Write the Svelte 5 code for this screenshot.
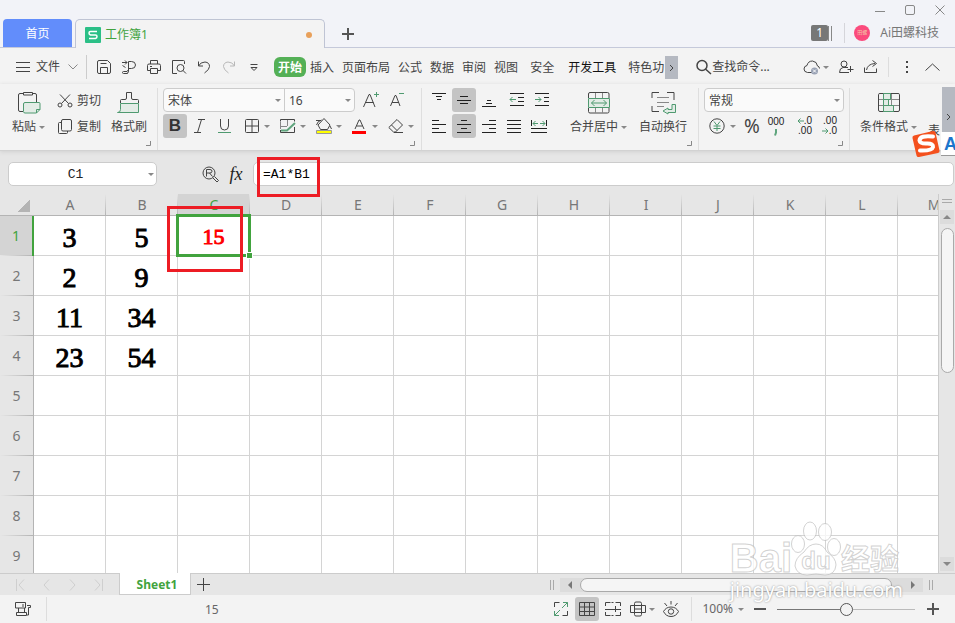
<script lang="ts">
  type Shape = [cls: string, d: string];
  type Icon = { w: number; h: number; shapes: Shape[] };

  const icons: Record<string, Icon> = {
    minimize: { w: 10, h: 10, shapes: [['grey', 'M0 6.5h10']] },
    maximize: { w: 10, h: 10, shapes: [['grey', 'M2 .5h6q1.500 0 1.500 1.500v6q0 1.500-1.500 1.500h-6q-1.500 0-1.500-1.500v-6q0-1.500 1.500-1.500z']] },
    close: { w: 10, h: 10, shapes: [['grey', 'M.5.5l9 9M9.500.5l-9 9']] },
    plus: { w: 12, h: 12, shapes: [['thick', 'M6 0v12M0 6h12']] },
    plusThin: { w: 14, h: 14, shapes: [['dark', 'M6.5 0v13M0 6.500h13']] },
    minus: { w: 12, h: 12, shapes: [['thick', 'M0 6h12']] },
    burger: { w: 14, h: 12, shapes: [['dark', 'M0 1.5h14M0 6.500h14M0 10.500h14']] },
    chevronDown: { w: 10, h: 6, shapes: [['grey', 'M.5.5l4.500 4.500 4.500-4.500']] },
    chevronUp: { w: 15, h: 8, shapes: [['dark', 'M.5 7.500l7-6.500 7 6.500']] },
    chevronRight: { w: 5, h: 8, shapes: [['dark', 'M1 1l3 3-3 3']] },
    save: { w: 16, h: 16, shapes: [['dark', 'M1.500 3q0-1.500 1.500-1.500h8.500l3 3V13q0 1.500-1.500 1.500H3q-1.500 0-1.500-1.500zM4.500 14V8.500h7V14M4.500 4.500h6']] },
    output: { w: 16, h: 16, shapes: [['dark', 'M1 3.500h5M4 1.500l2 2-2 2M1.500 6.500l3 2M6.500 14.500h-4q-1 0-1-1t1-1H6l1.500-2V2.500h3q4 0 4 3.500t-4 3.500h-3v2.500q0 2.500-2 2.500']] },
    print: { w: 16, h: 16, shapes: [['dark', 'M4.500 5V1.500h7V5M4 11.500H1.500V6.500q0-1.500 1.500-1.500h10q1.500 0 1.500 1.500v5H12M4.500 9.500h7v5h-7zM4 7.500h2']] },
    preview: { w: 16, h: 16, shapes: [['dark', 'M6 14.500H1.500v-13h11q1 0 1 1V5M13 9a3.500 3.500 0 1 1-7 0 3.500 3.500 0 0 1 7 0zM12 11.500l3 3']] },
    undo: { w: 16, h: 16, shapes: [['dark', 'M2.500 2.500v4.500H7M2.500 7q2-4 6.500-4 4.500.5 4.500 4.500 0 3-5 6.500']] },
    redo: { w: 16, h: 16, shapes: [['pale', 'M13.500 2.500v4.500H9M13.500 7q-2-4-6.500-4-4.500.5-4.500 4.500 0 3 5 6.500']] },
    more: { w: 16, h: 16, shapes: [['dark', 'M4.500 5.500h7M5 8.500l3 3 3-3z']] },
    search: { w: 16, h: 16, shapes: [['bold', 'M11 6.500a5 5 0 1 1-10 0 5 5 0 0 1 10 0zM10 10.500l5 4.500']] },
    cloud: { w: 18, h: 16, shapes: [['dark', 'M9 13.500H4.500Q1 13 1 10q0-3 3-3.500Q5 2 9.500 2q4.500.5 5 5 2 .5 2 2.500'], ['badge', 'M15 12a3.500 3.500 0 1 1-7 0 3.500 3.500 0 0 1 7 0z'], ['white', 'M10 10.500l3 3M13 10.500l-3 3']] },
    user: { w: 16, h: 16, shapes: [['dark', 'M9 5a3 3 0 1 1-6 0 3 3 0 0 1 6 0zM10 8.500H5Q1.500 9 1.500 13.500H11M12.500 7v6M9.500 10.500h6']] },
    share: { w: 16, h: 16, shapes: [['dark', 'M1.500 8.500v5h12v-4M3.500 11q1-6 8.500-6.500M9.500 1.500l4 3-4 3']] },
    dots: { w: 4, h: 14, shapes: [['fill', 'M1 1h2v2H1zM1 6h2v2H1zM1 11h2v2H1z']] },
    launcher: { w: 5, h: 5, shapes: [['grey', 'M4.500 0v4.500H0']] },

    paste: { w: 24, h: 24, shapes: [['dark', 'M6 2.500H3Q1.500 2.500 1.500 4v15q0 1.500 1.500 1.500h3M15 2.500h3q1.500 0 1.500 1.500v7M6.500 1.500h9v2.500h-9z'], ['tint', 'M8 11.500h14q1 0 1 1v6L19.500 22H8q-1.500 0-1.500-1.500V13q0-1.500 1.500-1.500zM19.500 22v-3.500H23']] },
    cut: { w: 16, h: 16, shapes: [['dark', 'M3 1.500l8.500 9M13 1.500l-8.500 9M5 12a2 2 0 1 1-4 0 2 2 0 0 1 4 0zM15 12a2 2 0 1 1-4 0 2 2 0 0 1 4 0z']] },
    copy: { w: 16, h: 16, shapes: [['dark', 'M4 3.500H2.500Q1.500 3.500 1.500 4.500v9q0 1 1 1h7q1 0 1-1V12M6 .5h7q1.500 0 1.500 1.500v8.500q0 1.500-1.500 1.500H6q-1.500 0-1.500-1.500V2q0-1.500 1.500-1.500z']] },
    brush: { w: 24, h: 24, shapes: [['dark', 'M3.500 12V9.500q0-1 1-1H8q1.500 0 1.500-1.500V1.500h5V7q0 1.500 1.500 1.500h4.500q1 0 1 1V12'], ['tint', 'M3.500 12.500h18v9H.5q3 0 3-3z']] },
    fontUp: { w: 18, h: 18, shapes: [['dark', 'M1.500 16L7 3.500h1L13 16M3.500 11.500h8'], ['green', 'M12 3.500h5M14.500 1v5']] },
    fontDown: { w: 18, h: 18, shapes: [['dark', 'M2.500 15L7 4.500h1L12 15M4 11.500h7'], ['green', 'M11 2.500h5']] },
    italic: { w: 16, h: 16, shapes: [['dark', 'M6 1.500h7M2 14.500h7M9.500 1.500l-4 13']] },
    underline: { w: 16, h: 16, shapes: [['dark', 'M3.500 1v7q0 4 4 4t4-4V1'], ['green', 'M1 14.500h13']] },
    borders: { w: 16, h: 16, shapes: [['dark', 'M1.500 2.500q0-1 1-1h11q1 0 1 1v11q0 1-1 1h-11q-1 0-1-1zM8 1.500v13M1.500 8h13']] },
    cellStyle: { w: 16, h: 16, shapes: [['dark', 'M.5 3.500V1.500h14v2M.5 12v2.500h14V9'], ['grey', 'M7.500 2v6M1 8.500h6M.5 4v7'], ['greenBold', 'M1 12.500h6l8-7.500']] },
    fill: { w: 16, h: 18, shapes: [['dark', 'M.5 8q1-4 5-5M4.500 12.500L2 8l6-6.500L14 8l-2.500 4.500zM0 3.500h5M14 9l1.500 3'], ['yellow', 'M.5 13.500h15v3H.5z']] },
    fontColor: { w: 16, h: 18, shapes: [['dark', 'M3 12L7 3h1l4 9M4.500 9h6'], ['red', 'M0 14h14v3H0z']] },
    eraser: { w: 16, h: 16, shapes: [['dark', 'M9 1.500l5.500 5.500-7 7h-2L.8 9.500zM3.500 7l5.500 5.500M6 14.500h9']] },
    top: { w: 14, h: 14, shapes: [['line', 'M0 .5h14M4 3.500h6M5 6.500h4']] },
    middle: { w: 14, h: 14, shapes: [['line', 'M3 3.500h8M0 7.500h14M3 10.500h8']] },
    bottom: { w: 14, h: 14, shapes: [['line', 'M5 7.500h4M4 10.500h6M0 13.500h14']] },
    outdent: { w: 16, h: 14, shapes: [['line', 'M1 .5h14M9 4.500h6M9 8.500h6M1 12.500h14'], ['green', 'M1 6.500h6M3.500 4L1 6.500 3.500 9']] },
    indent: { w: 16, h: 14, shapes: [['line', 'M1 .5h14M10 4.500h5M10 8.500h5M1 12.500h14'], ['green', 'M1 6.500h6M4.500 4L7 6.500 4.500 9']] },
    left: { w: 14, h: 14, shapes: [['line', 'M0 1.500h7M0 5.500h14M0 9.500h7M0 13.500h14']] },
    center: { w: 14, h: 14, shapes: [['line', 'M4 1.500h6M0 5.500h14M4 9.500h6M0 13.500h14']] },
    right: { w: 14, h: 14, shapes: [['line', 'M7 1.500h7M0 5.500h14M7 9.500h7M0 13.500h14']] },
    justify: { w: 14, h: 14, shapes: [['line', 'M0 1.500h14M0 5.500h14M0 9.500h14M0 13.500h14']] },
    spread: { w: 16, h: 14, shapes: [['line', 'M.5 1v6M15.500 1v6M0 9.500h16M0 13.500h16'], ['green', 'M2 4.500h5M9 4.500h5M4.500 2L2 4.500 4.500 7M11.500 2L14 4.500 11.500 7']] },
    merge: { w: 24, h: 24, shapes: [['dark', 'M1.500 7V3q0-1.500 1.500-1.500h17.500q1.500 0 1.500 1.500v4M1.500 17v3.500q0 1.500 1.500 1.500h17.500q1.500 0 1.500-1.500V17'], ['grey', 'M8.500 2v5M15.500 2v5M8.500 17v5M15.500 17v5'], ['tint', 'M1.500 7.500h21v9h-21z'], ['green', 'M4.500 12h15M7.500 9l-3 3 3 3M16.500 9l3 3-3 3']] },
    wrap: { w: 24, h: 24, shapes: [['dark', 'M1 7V1.500h7M16 1.500h7V9M1 15v5.500h7'], ['grey', 'M6 6.500h12M6 11.500h12M6 15.500h7'], ['tint', 'M21 13.500h3.500v8H17V23l-5-3 5-3v1.500h4z']] },
    arrowLeft: { w: 7, h: 6, shapes: [['green', 'M1 3h6M3.500.5L1 3l2.500 2.500']] },
    arrowRight: { w: 7, h: 6, shapes: [['green', 'M0 3h6M3.500.5L6 3 3.500 5.500']] },
    thousand: { w: 4, h: 7, shapes: [['greenBold', 'M2 0v3.500L1 6.500']] },
    condition: { w: 24, h: 24, shapes: [['grey', 'M2 8.500h20M2 14.500h20M7.500 3v17M14.500 3v17'], ['dark', 'M3 2.500h18q1.500 0 1.500 1v15.500q0 1.500-1.500 1.500H3q-1.500 0-1.500-1.500V3.500q0-1 1.500-1z'], ['tint', 'M6.500 2.500h7v6h-7zM6.500 8.500h5v6h-5zM6.500 14.500h10v6h-10z']] },
    yen: { w: 16, h: 16, shapes: [['dark', 'M15.200 8a7.200 7.200 0 1 1-14.400 0 7.200 7.200 0 0 1 14.400 0z'], ['green', 'M5 3.500l3 4 3-4M4.500 8h7M4.500 10.500h7M8 8v5']] },

    lookup: { w: 17, h: 17, shapes: [['dark', 'M13 7A6 6 0 1 1 1 7a6 6 0 0 1 12 0zM4.500 10.500v-7H8q2 0 2 1.700T8 7H4.500M7.500 7l3 3.500M11 12l4 4 1.500-1.500-4-4']] },
    first: { w: 9, h: 12, shapes: [['faint', 'M.5 0v12M8 .5L3 6l5 5.500']] },
    prev: { w: 9, h: 12, shapes: [['faint', 'M7 .5L2 6l5 5.500']] },
    next: { w: 9, h: 12, shapes: [['faint', 'M2 .5L7 6l-5 5.500']] },
    last: { w: 9, h: 12, shapes: [['faint', 'M8.500 0v12M1 .5L6 6l-5 5.500']] },
    macro: { w: 17, h: 16, shapes: [['dark', 'M.5 1.500h10V7H.5zM10.500 3v3M3.500 7v4.500M9.500 7v4.500M1.500 11.500h10v3h-10zM12 4.500h3.500v2h-2v7.500H12M8 3v3']] },
    fullscreen: { w: 16, h: 16, shapes: [['dark', 'M1.500 6V1.500h5M14.500 10v4.500h-5'], ['green', 'M9 7l5.500-5.500M10 1.500h4.500V6M7 9l-5.500 5.500M1.500 10v4.500H6']] },
    normal: { w: 16, h: 16, shapes: [['dark', 'M.5 1.500h15v13H.5zM.5 6h15M.5 10.500h15M5.500 1.500v13M10.500 1.500v13']] },
    pages: { w: 16, h: 16, shapes: [['dark', 'M.5 5V1.500h5M10.500 1.500h5V5M.5 11v3.500h5M10.500 14.500h5V11M0 8.500h16M10.500 5v6M8.500 1.500h-2M8.500 14.500h-2']] },
    reading: { w: 16, h: 16, shapes: [['dark', 'M4.500 2.500q0-1.500 1.500-1.500h4q1.500 0 1.500 1.500v11q0 1.500-1.500 1.500H6q-1.500 0-1.500-1.500zM.5 4.500h15v7H.5zM4.500 8h7']] },
    eye: { w: 16, h: 16, shapes: [['dark', 'M.5 10.500Q3 6 8 6t7.500 4.500Q13 15.500 8 15.500T.5 10.500zM10.700 10.500a2.700 2.700 0 1 1-5.400 0 2.700 2.700 0 0 1 5.400 0zM8 0v3.500M1.500 2l2.500 3M14.500 2L12 5']] },
  };

  const quickTools = ['save', 'output', 'print', 'preview', 'undo', 'redo', 'more'];
  const menuTabs = ['插入', '页面布局', '公式', '数据', '审阅', '视图'];
  const columns = 'ABCDEFGHIJKLM'.split('');
  const rows: string[][] = [['3', '5', '15'], ['2', '9'], ['11', '34'], ['23', '54'], [], [], [], [], []];

  let cellName = $state('C1');
  let formula = $state('=A1*B1');
  let zoom = $state(100);
</script>

{#snippet icon(name: string)}
  {@const i = icons[name]}
  <svg class="icon" width={i.w} height={i.h} viewBox="0 0 {i.w} {i.h}" aria-hidden="true">
    {#each i.shapes as [cls, d]}
      <path class={cls} {d} />
    {/each}
  </svg>
{/snippet}

{#snippet caret()}
  <span class="caret"></span>
{/snippet}

<div class="app">
  <header class="titlebar">
    <button class="home-tab">首页</button>
    <div class="doc-tab">
      <svg width="16" height="16" viewBox="0 0 16 16" aria-hidden="true">
        <rect width="16" height="16" rx="1" fill="#2bbf86" />
        <path d="M12 4.500H5.500Q4 4.500 4 6t1.500 2h5q1.500 0 1.500 1.500T10.500 11.500H4" fill="none" stroke="#fff" stroke-width="1.500" />
      </svg>
      <span class="doc-name">工作簿1</span>
      <span class="unsaved"></span>
    </div>
    <button class="new-tab" aria-label="New">{@render icon('plus')}</button>
    <div class="title-right">
      <div class="window-buttons">
        <button aria-label="Minimize">{@render icon('minimize')}</button>
        <button aria-label="Maximize">{@render icon('maximize')}</button>
        <button aria-label="Close">{@render icon('close')}</button>
      </div>
      <div class="account">
        <span class="count">1</span>
        <span class="bars"></span>
        <span class="account-sep"></span>
        <span class="avatar">田螺</span>
        <span class="account-name">Ai田螺科技</span>
      </div>
    </div>
  </header>

  <nav class="menubar">
    <button class="file-menu">{@render icon('burger')}<span>文件</span>{@render icon('chevronDown')}</button>
    <span class="menu-sep"></span>
    <div class="quick">
      {#each quickTools as tool}
        <button aria-label={tool}>{@render icon(tool)}</button>
      {/each}
    </div>
    <div class="tabs">
      <button class="active">开始</button>
      {#each menuTabs as tab}
        <button>{tab}</button>
      {/each}
      <button class="wide">安全</button>
      <button class="wide strong">开发工具</button>
      <button class="special">特色功</button>
      <button class="tab-scroll" aria-label="More tabs">{@render icon('chevronRight')}</button>
    </div>
    <button class="find">{@render icon('search')}<span>查找命令...</span></button>
    <div class="menu-right">
      <button class="with-caret" aria-label="Cloud">{@render icon('cloud')}{@render caret()}</button>
      <button aria-label="Share with">{@render icon('user')}</button>
      <button aria-label="Share">{@render icon('share')}</button>
      <span class="menu-sep light"></span>
      <button class="dots-btn" aria-label="Options">{@render icon('dots')}</button>
      <button aria-label="Collapse ribbon">{@render icon('chevronUp')}</button>
    </div>
  </nav>

  <section class="ribbon">
    <div class="group clipboard">
      <button class="big">{@render icon('paste')}<span>粘贴{@render caret()}</span></button>
      <div class="stack">
        <button class="small">{@render icon('cut')}剪切</button>
        <button class="small">{@render icon('copy')}复制</button>
      </div>
      <button class="big">{@render icon('brush')}<span>格式刷</span></button>
      <span class="launcher">{@render icon('launcher')}</span>
    </div>

    <div class="group font-group">
      <div class="stack">
        <div class="tools">
          <div class="font-box">
            <div class="select family">
              <select aria-label="Font"><option>宋体</option></select>{@render caret()}
            </div>
            <div class="select size">
              <select aria-label="Font size"><option>16</option></select>{@render caret()}
            </div>
          </div>
          <button class="tool grow" aria-label="Increase font">{@render icon('fontUp')}</button>
          <button class="tool" aria-label="Decrease font">{@render icon('fontDown')}</button>
        </div>
        <div class="tools">
          <button class="tool on bold-btn">B</button>
          <button class="tool" aria-label="Italic">{@render icon('italic')}</button>
          <button class="tool" aria-label="Underline">{@render icon('underline')}</button>
          <div class="drop-tools">
            {#each ['borders', 'cellStyle', 'fill', 'fontColor', 'eraser'] as tool}
              <button aria-label={tool}>{@render icon(tool)}{@render caret()}</button>
            {/each}
          </div>
        </div>
      </div>
      <span class="launcher">{@render icon('launcher')}</span>
    </div>

    <div class="group align-group">
      <div class="stack">
        <div class="tools">
          {#each ['top', 'middle', 'bottom', 'outdent', 'indent'] as tool}
            <button class="tool" class:on={tool === 'middle'} class:shift={tool === 'outdent'} aria-label={tool}>{@render icon(tool)}</button>
          {/each}
        </div>
        <div class="tools">
          {#each ['left', 'center', 'right', 'justify', 'spread'] as tool}
            <button class="tool" class:on={tool === 'center'} aria-label={tool}>{@render icon(tool)}</button>
          {/each}
        </div>
      </div>
      <button class="big merge">{@render icon('merge')}<span>合并居中{@render caret()}</span></button>
      <button class="big">{@render icon('wrap')}<span>自动换行</span></button>
      <span class="launcher">{@render icon('launcher')}</span>
    </div>

    <div class="group number-group">
      <div class="stack">
        <div class="select format">
          <select aria-label="Number format"><option>常规</option></select>{@render caret()}
        </div>
        <div class="tools numbers">
          <button class="currency" aria-label="Currency">{@render icon('yen')}{@render caret()}</button>
          <button class="percent">%</button>
          <button class="digits thousands" aria-label="Thousands separator"><span>000</span>{@render icon('thousand')}</button>
          <button class="digits"><span>{@render icon('arrowLeft')}.0</span><span>.00</span></button>
          <button class="digits"><span>.00</span><span>{@render icon('arrowRight')}.0</span></button>
        </div>
      </div>
      <span class="launcher">{@render icon('launcher')}</span>
    </div>

    <div class="group style-group">
      <button class="big condition">{@render icon('condition')}<span>条件格式{@render caret()}</span></button>
      <button class="big cut-off"><span>表</span></button>
      <button class="ribbon-scroll" aria-label="Scroll ribbon">{@render icon('chevronRight')}</button>
    </div>

    <div class="ime">
      <svg width="30" height="28" viewBox="0 0 30 28" aria-hidden="true">
        <path d="M3 5.500L22 1q2-.4 2.500 1.500l4 18q.4 2-1.500 2.500L8 27q-2 .4-2.500-1.500l-4-17.500Q1 6 3 5.500z" fill="#f4511e" />
        <path d="M22 6.500Q9 5 8.500 10.500q.5 3.500 8 3 6 0 5.500 3.500-1 4-13 3.500" fill="none" stroke="#fff" stroke-width="4" stroke-linecap="round" />
      </svg>
      <span class="ime-mode">A</span>
    </div>
  </section>

  <section class="formula-bar">
    <div class="name-box">
      <input aria-label="Cell" bind:value={cellName} />{@render caret()}
    </div>
    <button class="lookup" aria-label="Lookup">{@render icon('lookup')}</button>
    <button class="fx">fx</button>
    <div class="formula">
      <input aria-label="Formula" bind:value={formula} />
      <span class="mark mark-formula"></span>
    </div>
  </section>

  <main class="sheet">
    <div class="grid">
      <table>
        <thead>
          <tr>
            <th class="corner" aria-label="Select all"></th>
            {#each columns as col}
              <th class:current={col === 'C'}>{col}</th>
            {/each}
          </tr>
        </thead>
        <tbody>
          {#each rows as row, r}
            <tr>
              <th class:current={r === 0}>{r + 1}</th>
              {#each columns as _, c}
                {#if r === 0 && c === 2}
                  <td class="selected">{row[c]}<span class="handle"></span><span class="mark mark-cell"></span></td>
                {:else}
                  <td>{row[c] ?? ''}</td>
                {/if}
              {/each}
            </tr>
          {/each}
        </tbody>
      </table>
    </div>
    <div class="vscroll">
      <span class="splitter"></span>
      <button class="arrow up" aria-label="Scroll up"></button>
      <div class="thumb"></div>
      <button class="arrow down" aria-label="Scroll down"></button>
    </div>
  </main>

  <div class="sheetbar">
    <div class="sheet-nav">
      {#each ['first', 'prev', 'next', 'last'] as nav}
        <button aria-label={nav}>{@render icon(nav)}</button>
      {/each}
    </div>
    <button class="sheet-tab">Sheet1</button>
    <button class="add-sheet" aria-label="Add sheet">{@render icon('plusThin')}</button>
    <span class="vsplit"></span>
    <div class="hscroll">
      <button class="arrow back" aria-label="Scroll left"></button>
      <div class="thumb"></div>
      <button class="arrow forward" aria-label="Scroll right"></button>
    </div>
    <span class="vsplit end"></span>
  </div>

  <footer class="statusbar">
    <button class="macro" aria-label="Macro">{@render icon('macro')}</button>
    <span class="result">15</span>
    <div class="views">
      <button aria-label="Full screen">{@render icon('fullscreen')}</button>
      <button class="on" aria-label="Normal view">{@render icon('normal')}</button>
      <button aria-label="Page view">{@render icon('pages')}</button>
      <button class="read" aria-label="Reading layout">{@render icon('reading')}{@render caret()}</button>
      <button aria-label="Eye protection">{@render icon('eye')}</button>
    </div>
    <button class="zoom-value">{zoom}%{@render caret()}</button>
    <button aria-label="Zoom out" onclick={() => (zoom -= 10)}>{@render icon('minus')}</button>
    <input class="slider" type="range" min="10" max="190" aria-label="Zoom" bind:value={zoom} />
    <button class="zoom-in" aria-label="Zoom in" onclick={() => (zoom += 10)}>{@render icon('plus')}</button>
  </footer>

  <div class="watermark">
    <div class="wm-top">
      <span class="wm-bai">Bai</span>
      <div class="wm-paw">
        <svg width="52" height="56" viewBox="0 0 52 56" aria-hidden="true">
          <ellipse cx="8" cy="23" rx="6.500" ry="8.500" />
          <ellipse cx="20" cy="10" rx="6.500" ry="9" />
          <ellipse cx="35" cy="11" rx="6.500" ry="8.500" />
          <ellipse cx="44" cy="26" rx="6.500" ry="8.500" />
          <path d="M26 23q7 0 11 8 9 6 9 13-1 10-11 10-9-2-18 0-10 0-12-9 0-8 9-14 5-8 12-8z" />
        </svg>
        <span class="wm-du">du</span>
      </div>
      <span class="wm-cn">经验</span>
    </div>
    <div class="wm-url">jingyan.baidu.com</div>
  </div>
</div>

<style>
  :global(body) {
    margin: 0;
  }

  .app {
    position: relative;
    display: flex;
    flex-direction: column;
    height: 100vh;
    overflow: hidden;
    background: #e6e6e6;
    color: #444;
    font-family: "Noto Sans", "Noto Sans CJK SC", sans-serif;
    font-size: 12px;
    line-height: 18px;
  }

  .app * {
    box-sizing: border-box;
  }

  button,
  input,
  select {
    margin: 0;
    padding: 0;
    border: 0;
    background: none;
    color: inherit;
    font: inherit;
    outline: none;
  }

  button {
    display: flex;
    flex: none;
    align-items: center;
    justify-content: center;
    white-space: nowrap;
  }

  svg {
    display: block;
    flex: none;
    overflow: visible;
  }

  .icon path {
    fill: none;
    stroke: #444;
  }

  .icon .grey { stroke: #888; }
  .icon .pale { stroke: #b8b8b8; }
  .icon .faint { stroke: #cfcfcf; }
  .icon .line { stroke: #222; }
  .icon .thick { stroke: #555; stroke-width: 2; }
  .icon .bold { stroke-width: 1.5; }
  .icon .white { stroke: #fff; }
  .icon .badge { fill: #9aa3b5; stroke: none; }
  .icon .fill { fill: #444; stroke: none; }
  .icon .green { stroke: #4f9a70; }
  .icon .greenBold { stroke: #5fa57d; stroke-width: 2; }
  .icon .tint { fill: #e3ece6; stroke: #4f9a70; }
  .icon .yellow { fill: #ff0; stroke: #999; }
  .icon .red { fill: #f00; stroke: none; }

  .caret {
    flex: none;
    width: 0;
    height: 0;
    border: 3px solid transparent;
    border-top-color: #888;
    border-bottom: 0;
  }

  /* title bar */
  .titlebar {
    display: flex;
    flex: none;
    align-items: flex-end;
    height: 48px;
    padding-left: 3px;
    background: linear-gradient(#c5c9da, #c5c9da) bottom / 100% 1px no-repeat #f2f3f8;
  }

  .home-tab {
    width: 69px;
    height: 28px;
    padding-top: 2px;
    margin-bottom: 1px;
    border-radius: 4px 4px 0 0;
    background: #628dfb;
    color: #fff;
  }

  .doc-tab {
    display: flex;
    align-items: center;
    gap: 4px;
    width: 250px;
    height: 29px;
    margin-left: 3px;
    padding: 2px 12px 0 9px;
    border: 1px solid #bfc4d4;
    border-bottom: 0;
    border-radius: 5px 5px 0 0;
    background: #f3f3f3;
  }

  .doc-name {
    flex: 1;
    color: #41a33e;
  }

  .unsaved {
    width: 6px;
    height: 6px;
    border-radius: 50%;
    background: #e8a05a;
  }

  .new-tab {
    width: 46px;
    height: 28px;
  }

  .title-right {
    display: flex;
    flex-direction: column;
    align-items: flex-end;
    margin-left: auto;
  }

  .window-buttons {
    display: flex;
    gap: 20px;
    height: 13px;
    padding-right: 10px;
  }

  .window-buttons button {
    width: 10px;
    height: 10px;
  }

  .account {
    display: flex;
    align-items: center;
    height: 30px;
    padding-right: 16px;
  }

  .count {
    width: 17px;
    height: 16px;
    border-radius: 2px;
    background: #777;
    color: #fff;
    line-height: 16px;
    text-align: center;
  }

  .bars {
    width: 4px;
    height: 15px;
    border: 1px solid #888;
    border-width: 0 1px;
  }

  .account-sep {
    width: 1px;
    height: 20px;
    margin: 0 9px 0 12px;
    background: #d5d5da;
  }

  .avatar {
    width: 16px;
    height: 16px;
    border-radius: 50%;
    background: #fb4b7d;
    color: #f3c9a8;
    font-size: 5px;
    line-height: 14px;
    text-align: center;
  }

  .account-name {
    margin-left: 10px;
    color: #777;
  }

  /* menu row */
  .menubar {
    display: flex;
    flex: none;
    align-items: center;
    height: 38px;
    margin-bottom: -2px;
    padding-left: 16px;
    background: #f3f3f3;
  }

  .file-menu span {
    margin: 0 8px 0 6px;
  }

  .menu-sep {
    width: 1px;
    height: 24px;
    margin: 0 4px 0 8px;
    background: #ccc;
  }

  .quick {
    display: flex;
  }

  .quick button {
    width: 25px;
    height: 24px;
  }

  .tabs {
    display: flex;
    align-items: center;
    height: 24px;
    margin-left: 8px;
  }

  .tabs button {
    height: 20px;
    padding: 1px 4px 0;
  }

  .tabs .active {
    border-radius: 6px;
    background: #54b056;
    color: #fff;
    font-weight: bold;
  }

  .tabs .wide {
    padding: 1px 6px 0 8px;
  }

  .tabs .strong {
    color: #111;
  }

  .tabs .special {
    padding: 1px 1px 0 6px;
  }

  .tabs .tab-scroll {
    width: 13px;
    height: 23px;
    background: #b5b9c1;
  }

  .find {
    margin-left: 18px;
  }

  .menu-right {
    display: flex;
    align-items: center;
    gap: 9px;
    margin-left: auto;
    padding-right: 15px;
  }

  .with-caret {
    gap: 2px;
  }

  .menu-sep.light {
    height: 20px;
    margin: 0;
    background: #ddd;
  }

  .dots-btn {
    width: 18px;
  }

  /* ribbon */
  .ribbon {
    position: relative;
    z-index: 1;
    display: flex;
    flex: none;
    height: 67px;
    padding-top: 4px;
    border-bottom: 1px solid #d2d2d2;
    background: #f3f3f3;
    box-shadow: 0 1px 4px #d0d0d0;
  }

  .group {
    position: relative;
    display: flex;
    flex: none;
    height: 62px;
    border-right: 1px solid #dedede;
  }

  .stack {
    display: flex;
    flex-direction: column;
    gap: 2px;
  }

  .big {
    flex-direction: column;
    justify-content: flex-start;
    gap: 3px;
    height: 60px;
    padding-top: 3px;
  }

  .big span {
    display: flex;
    align-items: center;
    gap: 3px;
  }

  .small {
    gap: 4px;
    height: 24px;
    padding-top: 2px;
  }

  .launcher {
    position: absolute;
    right: 6px;
    bottom: 4px;
  }

  .clipboard {
    width: 158px;
    gap: 12px;
    padding-left: 12px;
  }

  .clipboard .big + .stack {
    margin-right: -2px;
  }

  .tools {
    display: flex;
    gap: 1px;
    height: 24px;
  }

  .tool {
    width: 24px;
    height: 24px;
    border-radius: 3px;
  }

  .on {
    border-radius: 3px;
    background: #c4c4c4;
  }

  .font-group {
    width: 264px;
    padding-left: 5px;
  }

  .font-box {
    display: flex;
    border: 1px solid #ccc;
    border-radius: 4px;
    background: #fafafa;
  }

  .select {
    display: flex;
    align-items: center;
    padding-right: 3px;
  }

  .select select {
    flex: 1;
    min-width: 0;
    height: 22px;
    padding: 2px 0 0 4px;
    appearance: none;
  }

  .family {
    width: 121px;
    border-right: 1px solid #ccc;
  }

  .size {
    width: 69px;
  }

  .grow {
    margin: 0 1px 0 3px;
  }

  .bold-btn {
    color: #333;
    font-family: "Liberation Sans", sans-serif;
    font-size: 17px;
    font-weight: bold;
  }

  .drop-tools {
    display: flex;
    margin-left: 6px;
  }

  .drop-tools button {
    gap: 4px;
    justify-content: flex-start;
    width: 36px;
  }

  .align-group {
    width: 277px;
    gap: 12px;
    padding-left: 5px;
  }

  .shift {
    margin-left: 3px;
  }

  .merge {
    margin-left: 4px;
  }

  .number-group {
    width: 151px;
    padding-left: 5px;
  }

  .format {
    width: 140px;
    height: 24px;
    border: 1px solid #ccc;
    border-radius: 4px;
    background: #fafafa;
  }

  .numbers {
    gap: 0;
    padding-left: 5px;
  }

  .currency {
    gap: 5px;
    margin-right: 3px;
  }

  .percent {
    width: 26px;
    font-size: 19px;
  }

  .digits {
    flex-direction: column;
    align-items: flex-end;
    width: 22px;
    margin-right: 3px;
    color: #222;
    font-family: "Liberation Sans", sans-serif;
    font-size: 10px;
    line-height: 10px;
  }

  .digits span {
    display: flex;
    align-items: center;
  }

  .thousands {
    align-items: center;
    gap: 2px;
  }

  .style-group {
    flex: 1;
    padding-left: 10px;
    border: 0;
  }

  .condition {
    margin-right: 11px;
  }

  .cut-off {
    justify-content: flex-end;
    padding-bottom: 8px;
  }

  .ribbon-scroll {
    width: 13px;
    height: 60px;
    margin: -1px 0 0 auto;
    background: #b5b9c1;
  }

  .ime {
    position: absolute;
    top: 46px;
    right: 0;
    display: flex;
    align-items: center;
  }

  .ime-mode {
    width: 14px;
    height: 24px;
    padding-left: 3px;
    overflow: hidden;
    border-bottom: 1px solid #999;
    background: #fff;
    color: #1c76cc;
    font-family: "Liberation Sans", sans-serif;
    font-size: 18px;
    font-weight: bold;
    line-height: 24px;
  }

  /* formula bar */
  .formula-bar {
    display: flex;
    flex: none;
    align-items: center;
    height: 43px;
    padding: 3px 1px 0 8px;
    color: #222;
  }

  .name-box,
  .formula {
    position: relative;
    display: flex;
    align-items: center;
    height: 24px;
    border: 1px solid #ccc;
    border-radius: 5px;
    background: #fff;
  }

  .name-box {
    width: 149px;
    padding-right: 2px;
  }

  .name-box input {
    flex: 1;
    min-width: 0;
    padding-right: 6px;
    text-align: center;
  }

  .name-box input,
  .formula input {
    padding-top: 2px;
    font-family: "Liberation Mono", monospace;
    font-size: 13px;
    line-height: 18px;
  }

  .lookup {
    margin-left: 45px;
  }

  .fx {
    width: 34px;
    font-family: "Liberation Serif", serif;
    font-size: 18px;
    font-style: italic;
  }

  .formula {
    flex: 1;
  }

  .formula input {
    width: 100%;
    padding-left: 9px;
    color: #000;
  }

  .mark {
    position: absolute;
    z-index: 3;
    border: 3px solid #ed1c24;
    pointer-events: none;
  }

  .mark-formula {
    top: -6px;
    left: 3px;
    width: 63px;
    height: 40px;
  }

  /* grid */
  .sheet {
    display: flex;
    flex: 1;
    min-height: 0;
  }

  .grid {
    flex: 1;
    min-width: 0;
    overflow: hidden;
    background: #fff;
  }

  table {
    border-collapse: separate;
    border-spacing: 0;
  }

  th {
    padding: 0;
    background: linear-gradient(#e6e6e6, #b4b4b4) right / 1px 100% no-repeat #e6e6e6;
    color: #777;
    font-size: 14px;
    font-weight: normal;
  }

  thead th {
    min-width: 72px;
    height: 22px;
    border-bottom: 1px solid #b4b4b4;
    line-height: 20px;
  }

  thead .corner {
    min-width: 34px;
    background: linear-gradient(135deg, transparent 50%, #b4b4b4 50%) 18px 6px / 12px 12px no-repeat #e6e6e6;
  }

  tbody th {
    height: 40px;
    border-right: 1px solid #b4b4b4;
    background: linear-gradient(90deg, #e6e6e6, #b4b4b4) bottom / 100% 1px no-repeat #e6e6e6;
  }

  th.current {
    background-color: #d4d4d4;
    color: #41a33e;
  }

  tbody th.current {
    border-right: 2px solid #41a33e;
  }

  td {
    height: 40px;
    padding: 4px 0 0;
    border-right: 1px solid #d4d4d4;
    border-bottom: 1px solid #d4d4d4;
    color: #000;
    font-family: "Liberation Serif", serif;
    font-size: 28px;
    line-height: 32px;
    text-align: center;
    -webkit-text-stroke: 1px;
  }

  .selected {
    position: relative;
    padding-top: 3px;
    color: #f00;
    font-size: 22px;
  }

  .selected::after {
    position: absolute;
    inset: -2px -2px -2px -2px;
    border: 3px solid #41a33e;
    content: "";
  }

  .handle {
    position: absolute;
    right: -4px;
    bottom: -4px;
    z-index: 2;
    width: 7px;
    height: 7px;
    border: 1px solid #fff;
    background: #41a33e;
  }

  .mark-cell {
    top: -10px;
    left: -11px;
    width: 76px;
    height: 66px;
  }

  .vscroll {
    display: flex;
    flex-direction: column;
    align-items: center;
    width: 17px;
    padding: 5px 0 2px;
    border-left: 1px solid #ccc;
  }

  .splitter {
    width: 10px;
    height: 4px;
    margin-bottom: 7px;
    border: 1px solid #aaa;
    border-width: 1px 0;
  }

  .arrow {
    width: 14px;
    height: 14px;
    background: #dcdcdc;
  }

  .arrow::before {
    width: 0;
    height: 0;
    border: 4px solid transparent;
    content: "";
  }

  .up::before { border-bottom-color: #888; border-top: 0; }
  .down::before { border-top-color: #888; border-bottom: 0; }
  .back::before { border-right-color: #777; border-left: 0; }
  .forward::before { border-left-color: #777; border-right: 0; }

  .thumb {
    border: 1px solid #aaa;
    border-radius: 8px;
    background: #f5f5f5;
  }

  .vscroll .thumb {
    width: 13px;
    height: 39%;
    margin: 4px 0 auto;
  }

  /* sheet tabs */
  .sheetbar {
    display: flex;
    flex: none;
    align-items: center;
    height: 22px;
    border-top: 1px solid #ccc;
  }

  .sheet-nav {
    display: flex;
    gap: 17px;
    width: 119px;
    padding-left: 16px;
  }

  .sheet-tab {
    width: 72px;
    height: 22px;
    margin-top: -1px;
    padding: 2px 0 0 4px;
    border: 1px solid #ccc;
    border-top: 0;
    background: #fff;
    color: #41a33e;
    font-weight: bold;
  }

  .add-sheet {
    width: 25px;
  }

  .vsplit {
    width: 4px;
    height: 10px;
    margin: 0 6px 0 auto;
    border: 1px solid #aaa;
    border-width: 0 1px;
  }

  .vsplit.end {
    margin: 0 22px 0 6px;
  }

  .hscroll {
    display: flex;
    align-items: center;
    width: 38%;
    background: #dcdcdc;
  }

  .hscroll .arrow {
    width: 20px;
  }

  .hscroll .thumb {
    width: 86%;
    height: 14px;
  }

  .hscroll .forward {
    margin-left: auto;
  }

  /* status bar */
  .statusbar {
    display: flex;
    flex: none;
    align-items: center;
    height: 28px;
    background: #f3f3f3;
    color: #666;
  }

  .macro {
    width: 47px;
    height: 24px;
    border-right: 1px solid #ddd;
  }

  .result {
    margin-left: 158px;
    padding-top: 2px;
  }

  .views {
    display: flex;
    gap: 2px;
    margin-left: auto;
    padding-right: 8px;
    border-right: 1px solid #ddd;
  }

  .views button {
    width: 24px;
    height: 24px;
  }

  .views .read {
    gap: 3px;
    width: 30px;
  }

  .zoom-value {
    gap: 5px;
    margin: 0 10px;
  }

  .slider {
    width: 138px;
    height: 14px;
    margin: 0 12px 0 11px;
    background: linear-gradient(90deg, #777 50%, #bbb 50%) center / 100% 1px no-repeat;
    appearance: none;
  }

  .slider::-webkit-slider-thumb {
    width: 13px;
    height: 13px;
    border: 1px solid #555;
    border-radius: 50%;
    background: #f3f3f3;
    appearance: none;
  }

  .zoom-in {
    margin-right: 16px;
  }

  /* watermark */
  .watermark {
    position: absolute;
    right: 52px;
    bottom: 20px;
    color: rgba(255, 255, 255, 0.8);
    font-family: "Liberation Sans", "Noto Sans CJK SC", sans-serif;
    font-weight: bold;
    pointer-events: none;
    -webkit-text-stroke: 1px rgba(180, 180, 180, 0.6);
  }

  .wm-top {
    display: flex;
    align-items: flex-end;
  }

  .wm-bai {
    font-size: 40px;
    line-height: 38px;
  }

  .wm-paw {
    position: relative;
    margin: 0 -1px 0 -2px;
  }

  .wm-paw path,
  .wm-paw ellipse {
    fill: rgba(255, 255, 255, 0.75);
    stroke: rgba(180, 180, 180, 0.6);
  }

  .wm-du {
    position: absolute;
    right: 0;
    bottom: 4px;
    left: 0;
    font-size: 24px;
    line-height: 24px;
    text-align: center;
  }

  .wm-cn {
    font-size: 29px;
    line-height: 34px;
  }

  .wm-url {
    color: #fff;
    font-family: "Noto Sans", sans-serif;
    font-size: 20px;
    font-weight: normal;
    line-height: 26px;
    -webkit-text-stroke-width: 0;
    text-shadow: 0 0 2px #888;
  }
</style>
